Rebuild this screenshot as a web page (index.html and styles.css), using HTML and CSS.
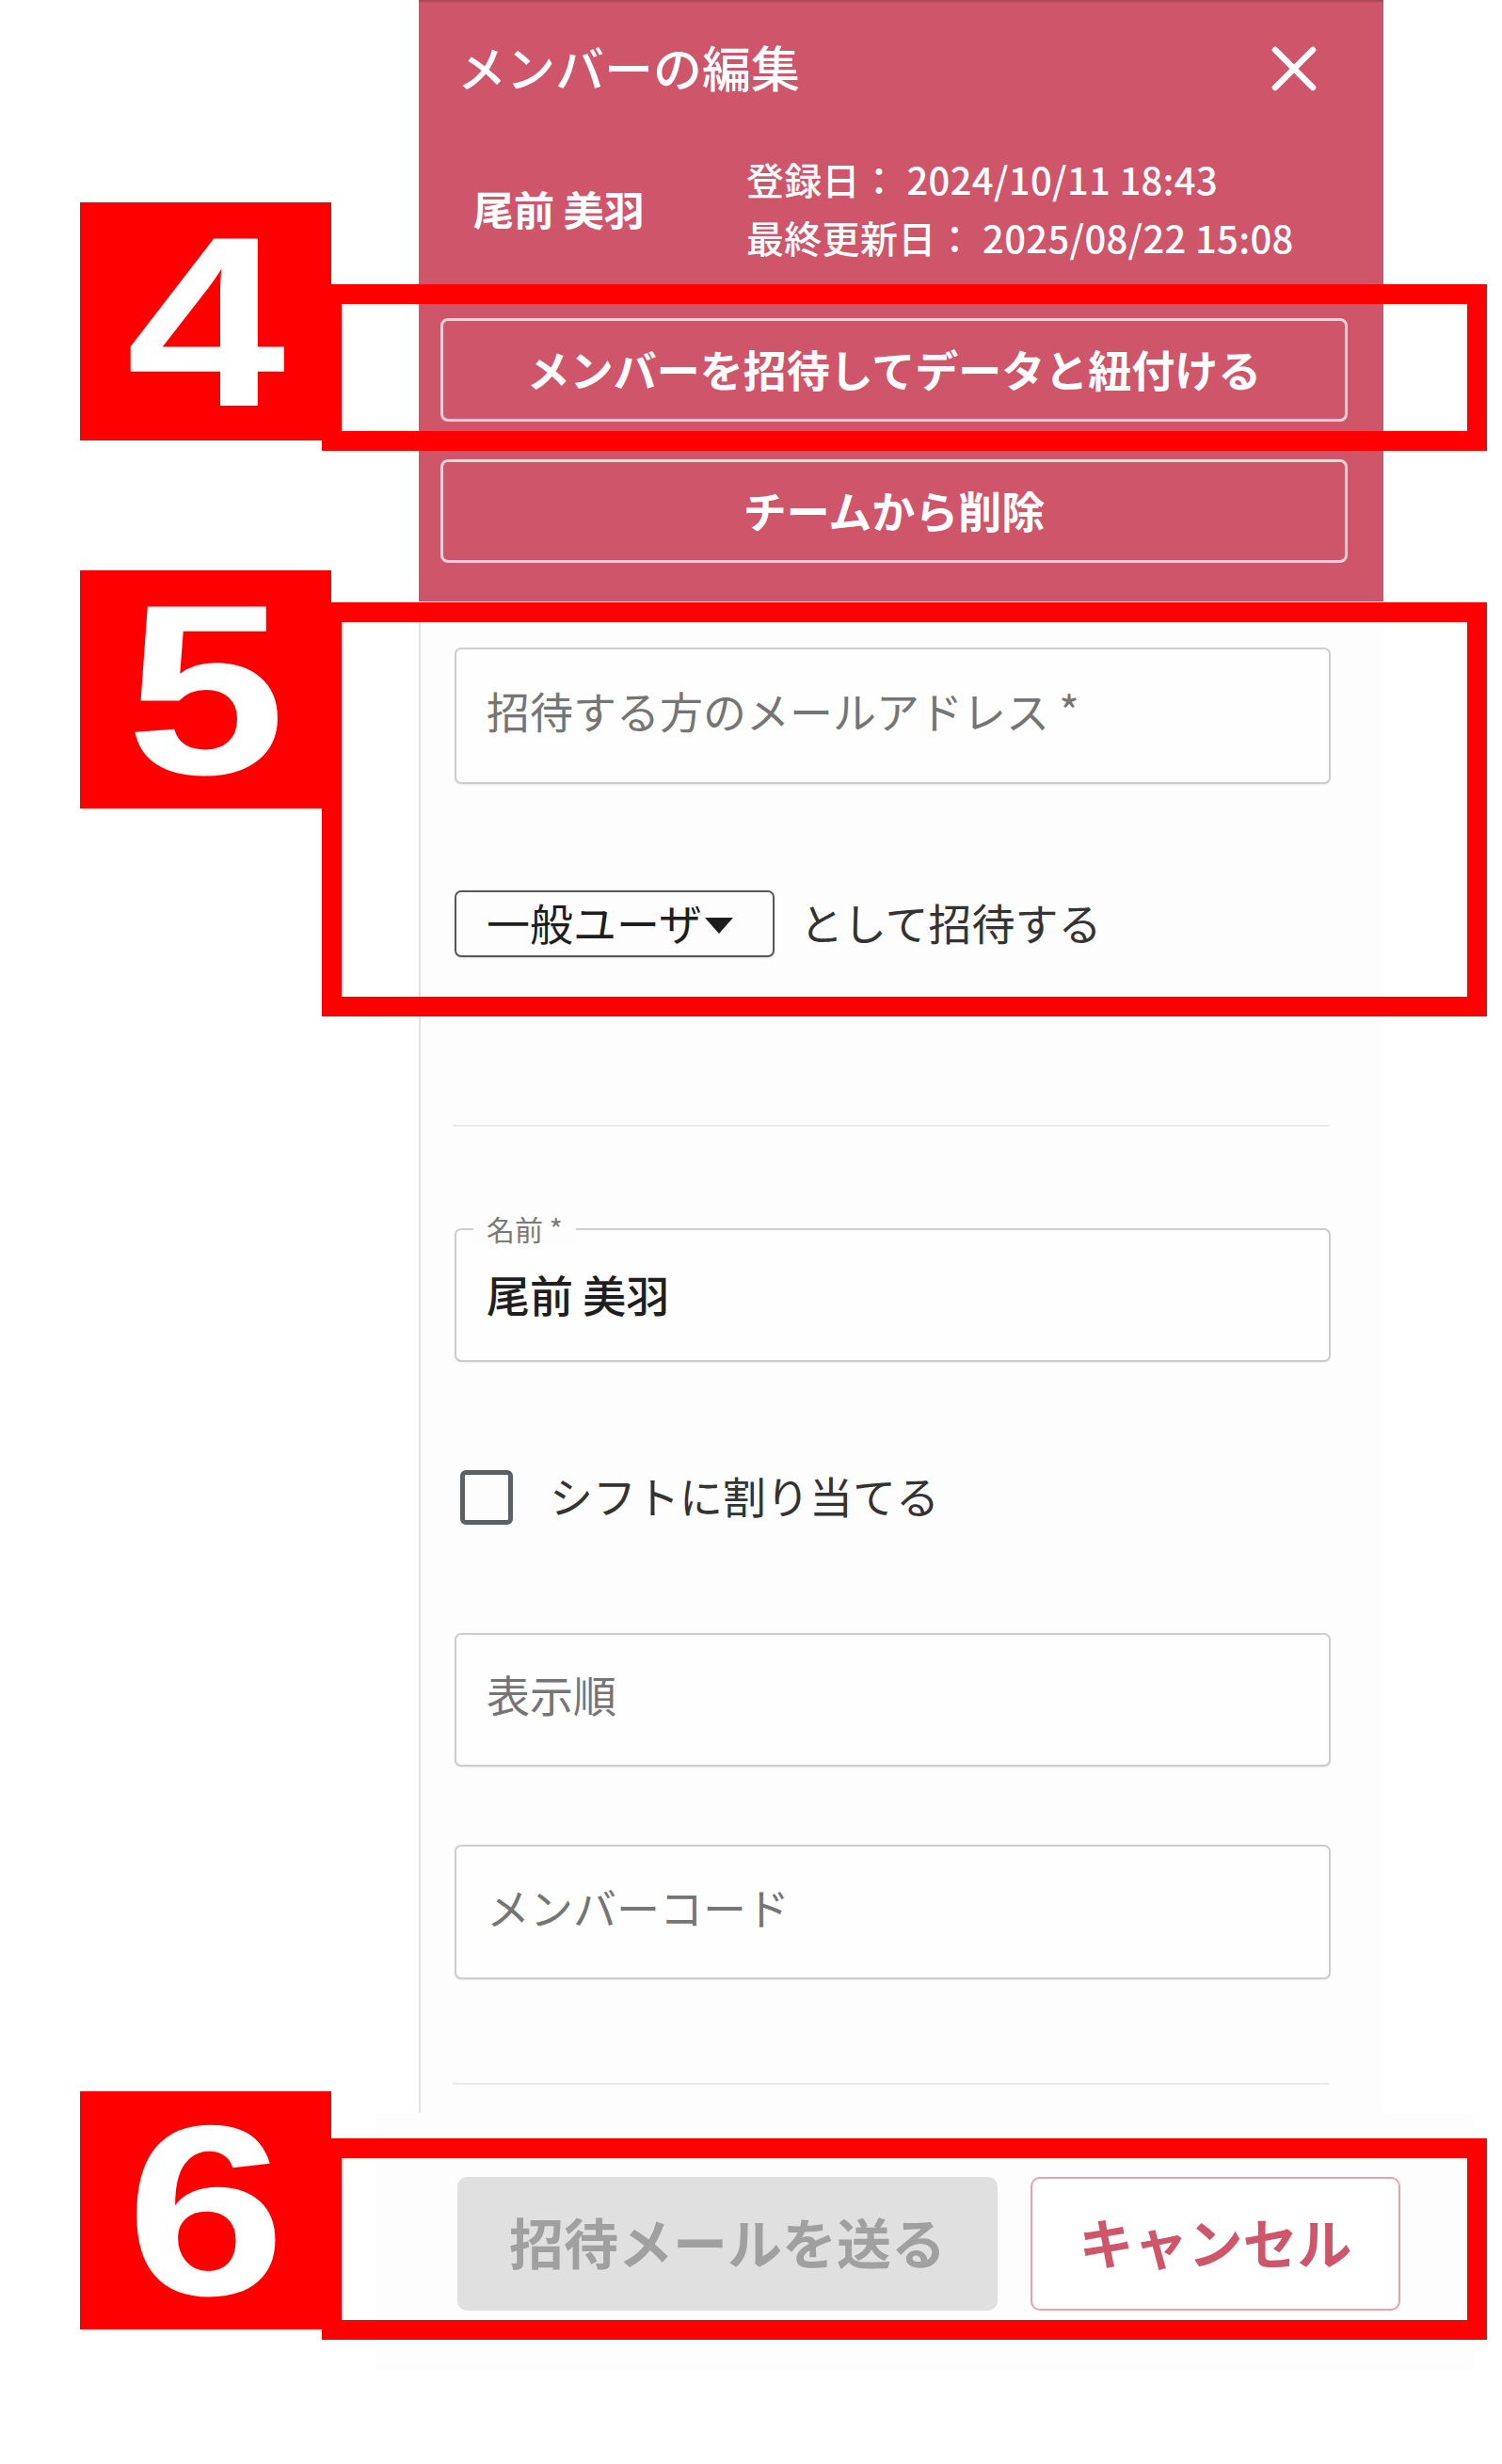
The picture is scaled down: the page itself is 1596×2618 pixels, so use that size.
FILE: index.html
```html
<!DOCTYPE html>
<html lang="ja">
<head>
  <meta charset="UTF-8" />
  <meta name="viewport" content="width=device-width, initial-scale=1.0"/>
  <title>メンバーの編集</title>
  <link rel="stylesheet" href="styles.css">
</head>
<body>
  <div class="sheet">
    <div class="sheet-head">
      <div class="head-top">
        <h1>メンバーの編集</h1>
        <button class="close-btn" aria-label="閉じる">
          <svg width="48" height="48" viewBox="0 0 48 48">
            <path d="M4 4 L44 44 M44 4 L4 44" stroke="#fff" stroke-width="6.5" stroke-linecap="round" fill="none"/>
          </svg>
        </button>
      </div>
      <div class="head-info">
        <div class="member-name">尾前 美羽</div>
        <div class="member-dates">
          <div>登録日： 2024/10/11 18:43</div>
          <div>最終更新日： 2025/08/22 15:08</div>
        </div>
      </div>
      <button class="head-btn first">メンバーを招待してデータと紐付ける</button>
      <button class="head-btn">チームから削除</button>
    </div>

    <div class="sheet-body">
      <input class="field" type="email" placeholder="招待する方のメールアドレス *">

      <div class="invite-row">
        <div class="role-select">
          <span>一般ユーザ</span>
          <svg width="34" height="20" viewBox="0 0 34 20"><path d="M2 2 H32 L17 19 Z" fill="#1e1e1e"/></svg>
        </div>
        <span class="invite-text">として招待する</span>
      </div>

      <hr class="divider first">

      <div class="outlined">
        <span class="float-label">名前 *</span>
        <span class="value">尾前 美羽</span>
      </div>

      <label class="check-row">
        <span class="check-box"></span>
        <span>シフトに割り当てる</span>
      </label>

      <input class="field order" type="text" placeholder="表示順">
      <input class="field code" type="text" placeholder="メンバーコード">

      <hr class="divider last">
    </div>
  </div>

  <div class="sheet-foot">
    <button class="send-btn" disabled>招待メールを送る</button>
    <button class="cancel-btn">キャンセル</button>
  </div>

  <!-- annotation callouts -->
  <div class="callout-frame f4"></div>
  <div class="callout-num n4"><span>4</span></div>
  <div class="callout-frame f5"></div>
  <div class="callout-num n5"><span>5</span></div>
  <div class="callout-frame f6"></div>
  <div class="callout-num n6"><span>6</span></div>
</body>
</html>
```

FILE: styles.css
```css
body {
  margin: 0;
  width: 1596px;
  min-height: 2618px;
  position: relative;
  background-color: #fff;
  font-family: "Noto Sans CJK JP", "Noto Sans", sans-serif;
  color: #2a2a2a;
}
button, input {
  font-family: inherit;
}
.sheet {
  margin-left: 445px;
  width: 1025px;
}
.sheet-head {
  background-color: #cf566a;
  height: 639px;
  box-sizing: border-box;
  box-shadow: inset 0 3px 2px -1px rgba(0, 0, 0, 0.18);
  color: #fff;
  overflow: hidden;
}
.head-top {
  height: 146px;
  display: flex;
  align-items: center;
  justify-content: space-between;
  padding: 0 71px 0 41px;
}
h1 {
  margin: -4px 0 0;
  font-size: 52px;
  font-weight: 500;
  line-height: 1;
}
.close-btn {
  background: none;
  border: 0;
  padding: 0;
  width: 48px;
  height: 48px;
  cursor: pointer;
}
.head-info {
  display: flex;
  align-items: center;
  margin-top: 13px;
  padding-left: 58px;
}
.member-name {
  width: 290px;
  font-size: 43px;
  font-weight: 700;
}
.member-dates {
  font-size: 40px;
  font-weight: 500;
  line-height: 62px;
  letter-spacing: 0.3px;
}
.head-btn {
  display: block;
  margin: 40px 0 0 23px;
  width: 964px;
  height: 110px;
  padding-bottom: 6px;
  background: transparent;
  border: 3px solid rgba(255, 255, 255, 0.72);
  border-radius: 8px;
  color: #fff;
  font-size: 46px;
  font-weight: 700;
  cursor: pointer;
}
.head-btn.first {
  margin-top: 55px;
}
.sheet-body {
  border-left: 2px solid #e3e3e3;
  background-color: #fdfdfd;
  padding: 49px 0 30px 36px;
  display: flex;
  flex-direction: column;
  align-items: flex-start;
}
.field, .outlined {
  box-sizing: border-box;
  width: 931px;
  height: 145px;
  border: 2px solid #cdcdcd;
  border-radius: 7px;
  background: #fefefe;
  box-shadow: 0 1px 2px rgba(0, 0, 0, 0.08);
  padding: 0 32px 14px;
  font-size: 46px;
  color: #222;
}
.field::placeholder {
  color: #757575;
}
.invite-row {
  display: flex;
  align-items: center;
  margin-top: 113px;
  height: 71px;
}
.role-select {
  box-sizing: border-box;
  width: 340px;
  height: 71px;
  border: 2px solid #585858;
  border-radius: 7px;
  display: flex;
  align-items: center;
  padding: 0 0 6px 32px;
  gap: 1px;
  font-size: 46px;
  line-height: 1;
  color: #1e1e1e;
  box-shadow: 0 1px 2px rgba(0, 0, 0, 0.15);
}
.role-select svg {
  margin-top: 8px;
}
.invite-text {
  margin: 0 0 6px 27px;
  font-size: 46px;
  line-height: 1;
  color: #333;
}
.divider {
  width: 931px;
  border: 0;
  border-top: 2px solid #e8e8e8;
  margin: 178px 0 0 -2px;
}
.divider.last {
  margin-top: 110px;
}
.outlined {
  position: relative;
  margin-top: 108px;
  height: 142px;
  display: flex;
  align-items: center;
  padding-bottom: 4px;
}
.float-label {
  position: absolute;
  top: -20px;
  left: 18px;
  padding: 0 14px;
  background: #fdfdfd;
  font-size: 30px;
  line-height: 36px;
  color: #7a7a7a;
}
.outlined .value {
  font-weight: 500;
  color: #1f1f1f;
}
.check-row {
  display: flex;
  align-items: center;
  margin-top: 115px;
  height: 58px;
  font-size: 46px;
  line-height: 1;
  color: #333;
}
.check-row span:last-child {
  margin-bottom: 6px;
}
.check-box {
  box-sizing: border-box;
  width: 56px;
  height: 58px;
  margin-left: 6px;
  margin-right: 39px;
  border: 5px solid #5b5f66;
  border-radius: 6px;
}
.field.order {
  margin-top: 115px;
  height: 142px;
}
.field.code {
  margin-top: 83px;
  height: 143px;
}
.sheet-foot {
  margin-left: 400px;
  width: 1080px;
  padding: 68px 0 64px 86px;
  background-color: #fdfdfd;
  display: flex;
  gap: 35px;
}
.send-btn, .cancel-btn {
  height: 142px;
  padding-bottom: 8px;
  border-radius: 10px;
  font-size: 58px;
  font-weight: 700;
}
.send-btn {
  width: 574px;
  background-color: #e0e0e0;
  border: 0;
  color: #a0a0a0;
}
.cancel-btn {
  width: 393px;
  background-color: #fff;
  border: 2px solid #e6a3ae;
  color: #cf566a;
  cursor: pointer;
}

/* annotation callouts */
.callout-frame {
  position: absolute;
  left: 342px;
  width: 1238px;
  box-sizing: border-box;
  border: 21px solid #ff0000;
}
.callout-frame.f4 { top: 302px; height: 177px; }
.callout-frame.f5 { top: 640px; height: 440px; }
.callout-frame.f6 { top: 2272px; height: 214px; }
.callout-num {
  position: absolute;
  left: 85px;
  width: 267px;
  height: 253px;
  background-color: #ff0000;
  display: flex;
  align-items: center;
  justify-content: center;
}
.callout-num span {
  font-family: "Liberation Sans", Arial, sans-serif;
  font-weight: 700;
  font-size: 258px;
  line-height: 1;
  color: #fff;
  transform: scaleX(1.18);
}
.callout-num.n4 { top: 215px; }
.callout-num.n5 { top: 606px; }
.callout-num.n6 { top: 2222px; }
```
